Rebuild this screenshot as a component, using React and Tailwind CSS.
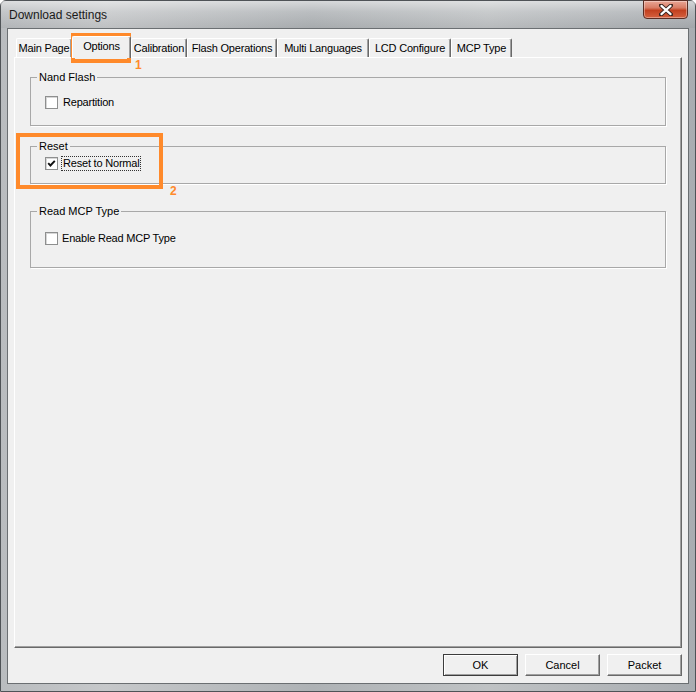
import React from 'react';

const tabs = [
  { label: 'Main Page', w: 'w-[56px]' },
  { label: 'Options', w: 'w-[59px]', active: true },
  { label: 'Calibration', w: 'w-[56px]' },
  { label: 'Flash Operations', w: 'w-[90px]' },
  { label: 'Multi Languages', w: 'w-[92px]' },
  { label: 'LCD Configure', w: 'w-[82px]' },
  { label: 'MCP Type', w: 'w-[61px]' },
];

const Checkbox = ({ checked }) => (
  <span className="w-[13px] h-[13px] shrink-0 border border-[#8e8f8f] bg-white shadow-[inset_1px_1px_0_#d6d6d6] flex items-center justify-center">
    {checked && (
      <svg width="9" height="9" viewBox="0 0 9 9">
        <path d="M1.2 4.2 L3.4 6.5 L7.8 1.8" fill="none" stroke="#111" strokeWidth="1.9" />
      </svg>
    )}
  </span>
);

const Group = ({ title, className, rowClass, children }) => (
  <fieldset className={`mx-[15px] border border-[#a8a8a8] shadow-[1px_1px_0_#ffffff] ${className}`}>
    <legend className="ml-[6px] px-[2px] text-[11px] leading-[13px]">{title}</legend>
    <div className={`flex items-center gap-[5px] pl-[14px] ${rowClass}`}>{children}</div>
  </fieldset>
);

const Button = ({ children, primary }) => (
  <button
    className={`w-[75px] h-[22px] text-[11px] bg-[#f0f0f0] ${
      primary
        ? 'border border-[#3c3c3c] shadow-[inset_1px_1px_0_#ffffff,inset_-1px_-1px_0_#a0a0a0]'
        : 'border border-t-white border-l-white border-r-[#696969] border-b-[#696969] shadow-[inset_-1px_-1px_0_#a0a0a0]'
    }`}
  >
    {children}
  </button>
);

export default function App() {
  return (
    <div className="relative w-[696px] h-[692px] overflow-hidden font-['Liberation_Sans',Arial,sans-serif] text-black">
      <div className="w-full h-full flex flex-col rounded-t-[6px] border border-[#4f5357] bg-[linear-gradient(90deg,#b9bcbf_0%,#c6c8ca_15%,#aeb2b5_45%,#bfc2c4_70%,#a9adb1_100%)]">
        {/* title bar */}
        <div className="h-[27px] flex justify-between items-start pl-[8px] pr-[7px] bg-[linear-gradient(180deg,rgba(255,255,255,0.5)_0%,rgba(255,255,255,0.15)_40%,rgba(0,0,0,0.04)_100%)]">
          <span className="mt-[7px] text-[12px] leading-[14px] text-[#1a1a1a]">Download settings</span>
          <div className="w-[45px] h-[19px] -mt-px rounded-b-[4px] border border-[#5a2d24] bg-[linear-gradient(180deg,#e9a796_0%,#d87c65_40%,#c2401f_55%,#d5613f_100%)] shadow-[inset_0_0_0_1px_rgba(255,255,255,0.35)] flex items-center justify-center">
            <svg width="14" height="12" viewBox="0 0 14 12">
              <path d="M2 1.5 L12 10.5 M12 1.5 L2 10.5" stroke="#3b2520" strokeWidth="4.2" strokeLinecap="round" />
              <path d="M2.4 1.9 L11.6 10.1 M11.6 1.9 L2.4 10.1" stroke="#ffffff" strokeWidth="2.2" strokeLinecap="round" />
            </svg>
          </div>
        </div>

        {/* client area */}
        <div className="ml-[6px] mr-[6px] h-[656px] border border-[#6b6f72] bg-[#f0f0f0] flex flex-col">
          <div className="h-[28px] flex items-end pl-[8px]">
            {tabs.map((t) =>
              t.active ? (
                <div
                  key={t.label}
                  className={`${t.w} h-[22px] -mb-px relative z-10 bg-[#f0f0f0] border-t border-l border-white border-r border-r-[#696969] shadow-[inset_-1px_0_0_#a0a0a0] rounded-t-[2px] flex justify-center pt-[3px] text-[11px] leading-[13px] tracking-[-0.2px]`}
                >
                  {t.label}
                </div>
              ) : (
                <div
                  key={t.label}
                  className={`${t.w} h-[19px] border-t border-l border-white border-r border-r-[#696969] shadow-[inset_-1px_0_0_#a0a0a0] rounded-t-[2px] flex justify-center pt-[3px] text-[11px] leading-[13px] tracking-[-0.2px]`}
                >
                  {t.label}
                </div>
              )
            )}
          </div>

          <div className="mx-[6px] h-[591px] border-t border-l border-white border-r border-b border-r-[#696969] border-b-[#696969] shadow-[inset_-1px_-1px_0_#a0a0a0] flex flex-col">
            <Group title="Nand Flash" className="mt-[13px]" rowClass="mt-[12px] mb-[16px]">
              <Checkbox />
              <span className="text-[11px] leading-[13px] tracking-[-0.2px]">Repartition</span>
            </Group>
            <Group title="Reset" className="mt-[14px]" rowClass="mt-[4px] mb-[13px]">
              <Checkbox checked />
              <span className="text-[11px] leading-[13px] tracking-[-0.2px] -ml-px px-px outline outline-1 outline-dotted outline-[#333]">Reset to Normal</span>
            </Group>
            <Group title="Read MCP Type" className="mt-[21px]" rowClass="mt-[14px] mb-[22px]">
              <Checkbox />
              <span className="text-[11px] leading-[13px] tracking-[-0.2px] -ml-px">Enable Read MCP Type</span>
            </Group>
          </div>

          <div className="mt-[6px] flex justify-end gap-[7px] pr-[6px]">
            <Button primary>OK</Button>
            <Button>Cancel</Button>
            <Button>Packet</Button>
          </div>
        </div>
      </div>

      {/* annotations */}
      <div className="absolute left-[71px] top-[33px] w-[60px] h-[30px] border-[4px] border-[#ff8a2b]" />
      <span className="absolute left-[135px] top-[58px] text-[12px] font-bold leading-[14px] text-[#ff8a2b]">1</span>
      <div className="absolute left-[16px] top-[133px] w-[147px] h-[56px] border-[4px] border-[#ff8a2b]" />
      <span className="absolute left-[170px] top-[184px] text-[12px] font-bold leading-[14px] text-[#ff8a2b]">2</span>
    </div>
  );
}
